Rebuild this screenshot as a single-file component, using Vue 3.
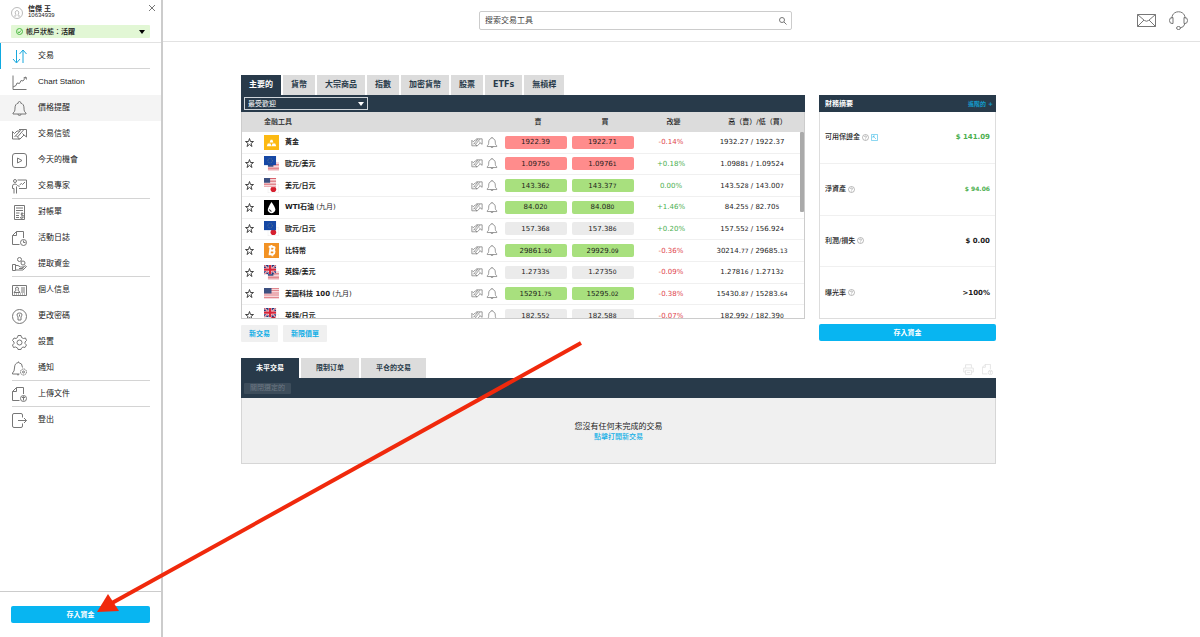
<script setup>
import { ref } from 'vue'

const search = ref('')
const list = ref('popular')

const menu = [
  { icon: 'trade', label: '交易', active: true, line: true },
  { icon: 'chart', label: 'Chart Station' },
  { icon: 'bell', label: '價格提醒', hover: true },
  { icon: 'signal', label: '交易信號' },
  { icon: 'play', label: '今天的機會' },
  { icon: 'expert', label: '交易專家', line: true },
  { icon: 'statement', label: '對帳單' },
  { icon: 'log', label: '活動日誌' },
  { icon: 'withdraw', label: '提取資金', line: true },
  { icon: 'card', label: '個人信息' },
  { icon: 'lock', label: '更改密碼' },
  { icon: 'gear', label: '設置' },
  { icon: 'notify', label: '通知', line: true },
  { icon: 'upload', label: '上傳文件', line: true },
  { icon: 'logout', label: '登出' },
]

const tabs = ['主要的', '貨幣', '大宗商品', '指數', '加密貨幣', '股票', 'ETFs', '無槓桿']
const lowerTabs = ['未平交易', '限制订单', '平仓的交易']

const rows = [
  { flag: 'gold', name: '黃金', tone: 'red', sell: ['1922.39', ''], buy: ['1922.71', ''], change: '-0.14%', high: ['1932.27', ''], low: ['1922.37', ''] },
  { flag: 'eu-us', name: '歐元/美元', tone: 'red', sell: ['1.0975', '0'], buy: ['1.0976', '1'], change: '+0.18%', high: ['1.0988', '1'], low: ['1.0952', '4'] },
  { flag: 'us-jp', name: '美元/日元', tone: 'green', sell: ['143.36', '2'], buy: ['143.37', '7'], change: '0.00%', high: ['143.52', '8'], low: ['143.00', '7'] },
  { flag: 'oil', name: 'WTI石油', note: '(九月)', tone: 'green', sell: ['84.02', '0'], buy: ['84.08', '0'], change: '+1.46%', high: ['84.25', '5'], low: ['82.70', '5'] },
  { flag: 'eu-jp', name: '歐元/日元', tone: 'plain', sell: ['157.36', '8'], buy: ['157.38', '6'], change: '+0.20%', high: ['157.55', '2'], low: ['156.92', '4'] },
  { flag: 'btc', name: '比特幣', tone: 'green', sell: ['29861.', '50'], buy: ['29929.', '09'], change: '-0.36%', high: ['30214.', '77'], low: ['29685.', '13'] },
  { flag: 'gb-us', name: '英鎊/美元', tone: 'plain', sell: ['1.2733', '5'], buy: ['1.2735', '0'], change: '-0.09%', high: ['1.2781', '6'], low: ['1.2713', '2'] },
  { flag: 'us', name: '美國科技 100', note: '(九月)', tone: 'green', sell: ['15291.', '75'], buy: ['15295.', '02'], change: '-0.38%', high: ['15430.', '87'], low: ['15283.', '64'] },
  { flag: 'gb-jp', name: '英鎊/日元', tone: 'plain', sell: ['182.55', '2'], buy: ['182.58', '8'], change: '-0.07%', high: ['182.99', '2'], low: ['182.39', '0'] },
]

const summary = [
  { label: '可用保證金', value: '$ 141.09', up: true, extra: true },
  { label: '淨資產', value: '$ 94.06', up: true, narrow: true },
  { label: '利潤/損失', value: '$ 0.00' },
  { label: '曝光率', value: '>100%' },
]
</script>

<template>
  <div class="app">
    <svg class="defs" aria-hidden="true">
      <defs>
        <symbol id="i-trade" viewBox="0 0 30 30"><path d="M9 2v25M2 20l7 8 7-8M22 28V3M15 10l7-8 7 8" /></symbol>
        <symbol id="i-chart" viewBox="0 0 30 30"><path d="M2 1v28h27M2 24l6-3 2-5 5 1 3-6 4 1 6-8M23 6l5-2 1 5" /></symbol>
        <symbol id="i-bell" viewBox="0 0 30 30"><path d="M15 1a2 2 0 0 1 2 3c5 1 7 5 7 10 0 6 1 8 4 10v2H2v-2c3-2 4-4 4-10 0-5 2-9 7-10a2 2 0 0 1 2-3zM12 26a3 3 0 0 0 6 0" /></symbol>
        <symbol id="i-signal" viewBox="0 0 30 30"><path d="M1 9v15h14l-4-4L23 6M5 20L17 7l-3-2h15v15l-5-4-8 8h-3M1 9l4 4 5-5h5M24 16l-3-3M8 17l3 3" /></symbol>
        <symbol id="i-play" viewBox="0 0 30 30"><rect x="1" y="1" width="28" height="28" rx="5" /><path d="M11 10v10l9-5z" /></symbol>
        <symbol id="i-expert" viewBox="0 0 30 30"><circle cx="6" cy="4" r="3" /><path d="M11 2h18v17H14M1 19v-5q0-4 5-4 3 0 5 3l4 2M4 29V19H1M9 29V15M15 12l4-3 2 2 5-5" /></symbol>
        <symbol id="i-statement" viewBox="0 0 30 30"><path d="M5 1h20v28H5zM8 6h14M8 11h14M8 16h7M8 21h6M8 25h6M23 17q-5-2-5 1t5 3-1 4-5-1M20 15v12" /></symbol>
        <symbol id="i-log" viewBox="0 0 30 30"><path d="M23 14V1H9L1 9v18h14M9 1v8H1" /><circle cx="23" cy="23" r="6" /><path d="M23 19v4h4" /></symbol>
        <symbol id="i-withdraw" viewBox="0 0 30 30"><circle cx="15" cy="5" r="4" /><circle cx="22" cy="12" r="4" /><path d="M1 15h6v12H1zM7 17h5l5 3h5q2 3-2 3h-6M7 26h15l7-7q-2-3-5 0l-3 2" /></symbol>
        <symbol id="i-card" viewBox="0 0 30 30"><path d="M1 5h28v20H1zM4 19q1-3 4-4-3-7 2-7t2 7q3 1 4 4zM18 10h8M18 14h8M18 18h8M4 22h2M8 22h2M12 22h2M16 22h2M20 22h2M24 22h2" /></symbol>
        <symbol id="i-lock" viewBox="0 0 30 30"><circle cx="15" cy="15" r="14" /><path d="M12 16q-5-8 3-8t3 8v6h-6zM15 11v4" /></symbol>
        <symbol id="i-gear" viewBox="0 0 30 30"><path d="M12 1h6l1 4 4 2 4-1 2 5-3 3v3l3 3-3 5-4-1-3 2-1 3h-6l-1-3-4-2-4 1-2-5 3-3v-3l-3-3 3-5 4 1 3-2z" /><circle cx="15" cy="15" r="5" /></symbol>
        <symbol id="i-notify" viewBox="0 0 30 30"><path d="M13 1v2q8 1 8 10M13 3q-8 1-8 11 0 7-4 10v2h14M10 27q2 2 4 0" /><circle cx="23" cy="22" r="6" stroke-dasharray="3 1" /><circle cx="23" cy="22" r="2" /></symbol>
        <symbol id="i-upload" viewBox="0 0 30 30"><path d="M23 14V1H9L1 9v18h14M9 1v8H1" /><circle cx="23" cy="23" r="6" /><path d="M23 27v-7M20 22l3-3 3 3" /></symbol>
        <symbol id="i-logout" viewBox="0 0 30 30"><path d="M21 9V4q0-3-3-3H4Q1 1 1 4v22q0 3 3 3h14q3 0 3-3v-5M12 15h17M24 10l5 5-5 5" /></symbol>
        <symbol id="i-print" viewBox="0 0 30 30"><path d="M7 10V2h16v8M7 22H2V11h26v11h-5M7 17h16v12H7zM11 23h8" /></symbol>
        <symbol id="f-us" viewBox="0 0 16 12">
          <path fill="#fff" d="M0 0h16v12H0z" />
          <path fill="#d9616b" d="M0 0h16v1H0zM0 2h16v1H0zM0 4h16v1H0zM0 6h16v1H0zM0 8h16v1H0zM0 10h16v1H0z" />
          <path fill="#3d5080" d="M0 0h8v6H0z" />
        </symbol>
        <symbol id="f-eu" viewBox="0 0 16 12"><path fill="#1648a5" d="M0 0h16v12H0z" /><circle cx="8" cy="6" r="3" fill="none" stroke="#6f8387" stroke-dasharray="1 1" /></symbol>
        <symbol id="f-gb" viewBox="0 0 16 12">
          <path fill="#26397c" d="M0 0h16v12H0z" />
          <path stroke="#fff" stroke-width="2" d="M0 0l16 12M16 0L0 12" /><path stroke="#d8263a" d="M0 0l16 12M16 0L0 12" />
          <path stroke="#fff" stroke-width="4" d="M8 0v12M0 6h16" /><path stroke="#d8263a" stroke-width="3" d="M8 0v12M0 6h16" />
        </symbol>
        <symbol id="f-jp" viewBox="0 0 16 12"><path fill="#fff" stroke="#e4e4e4" d="M0 0h16v12H0z" /></symbol>
      </defs>
    </svg>

    <aside class="side">
      <header class="user">
        <svg class="avatar" viewBox="0 0 24 24"><circle cx="12" cy="12" r="11" /><path d="M6 18h3c2-1 1-2 0-4-3-9 9-9 6 0-1 2-2 3 0 4h3" /></svg>
        <div class="who"><strong>信傑 王</strong><span>10634939</span></div>
        <button class="close" aria-label="關閉"><svg viewBox="0 0 8 8"><path d="M1 1l6 6M7 1L1 7" /></svg></button>
      </header>
      <button class="status">
        <svg class="ok" viewBox="0 0 14 14"><circle cx="7" cy="7" r="6" /><path d="M4 7l2 3 4-5" /></svg>
        <span>帳戶狀態：<b>活躍</b></span>
        <i class="caret dark"></i>
      </button>
      <nav class="menu">
        <a v-for="m in menu" :key="m.label" href="#" :class="{ active: m.active, hover: m.hover, line: m.line }">
          <svg class="icon"><use :href="'#i-' + m.icon" /></svg>
          <span>{{ m.label }}</span>
        </a>
      </nav>
      <footer><button class="deposit">存入資金</button></footer>
    </aside>

    <div class="page">
      <header class="top">
        <label class="search">
          <input v-model="search" type="text" placeholder="搜索交易工具" aria-label="搜索交易工具" />
          <svg viewBox="0 0 16 16"><circle cx="6" cy="6" r="5" /><path d="M10 10l5 5" /></svg>
        </label>
        <div class="actions">
          <button aria-label="郵件"><svg class="mail" viewBox="0 0 38 26"><path d="M1 1h36v24H1zM1 1l14 12q4 3 8 0L37 1M1 25l13-13M37 25L24 12" /></svg></button>
          <button aria-label="客服"><svg class="headset" viewBox="0 0 38 38"><path d="M6 15C5-3 33-3 32 15M6 13q-5 0-5 6t5 6h2V13zM32 13q5 0 5 6t-5 6h-2V13zM32 25q-2 8-10 9" /><ellipse cx="19" cy="34" rx="4" ry="3" /></svg></button>
        </div>
      </header>

      <main>
        <div class="upper">
          <section class="market">
            <div class="tabs">
              <button v-for="(t, i) in tabs" :key="t" :class="{ on: i === 0 }">{{ t }}</button>
            </div>
            <div class="bar">
              <div class="pick">
                <select v-model="list" aria-label="清單"><option value="popular">最受歡迎</option></select>
                <i class="caret"></i>
              </div>
            </div>
            <div class="frame">
              <table>
                <colgroup><col class="c-star" /><col /><col class="c-tools" /><col class="c-price" /><col class="c-price" /><col class="c-change" /><col class="c-range" /></colgroup>
                <thead>
                  <tr><th></th><th class="first">金融工具</th><th></th><th>賣</th><th>買</th><th>改變</th><th>高（賣）/低（買）</th></tr>
                </thead>
                <tbody>
                  <tr v-for="r in rows" :key="r.name">
                    <td>
                      <button class="star" aria-label="收藏"><svg viewBox="0 0 18 18"><path d="M9 1l2 6h6l-5 4 2 6-5-4-5 4 2-6-5-4h6z" /></svg></button>
                    </td>
                    <td>
                      <div class="asset">
                        <svg class="flag" viewBox="0 0 16 16">
                          <template v-if="r.flag === 'gold'"><path fill="#fcb912" d="M0 0h16v16H0z" /><path fill="#fff" d="M7 5h2l1 3H6zM4 9h3l1 3H3zM9 9h3l1 3H8z" /></template>
                          <template v-else-if="r.flag === 'oil'"><path fill="#000" d="M0 0h16v16H0z" /><path fill="#fff" d="M8 2q5 7 4 9-1 3-4 3t-4-3q0-3 4-9z" /><path stroke="#000" fill="none" d="M6 10q0 2 2 2" /></template>
                          <template v-else-if="r.flag === 'btc'"><path fill="#f29224" d="M0 0h16v16H0z" /><path fill="none" stroke="#fff" stroke-width="2" d="M5 4h4q3 0 2 2 0 2-3 2H6h3q3 0 2 2 0 2-3 2H5M7 4L6 12M8 2v2M9 12v2" /></template>
                          <use v-else-if="r.flag === 'us'" href="#f-us" y="2" width="16" height="12" />
                          <template v-else>
                            <use :href="'#f-' + r.flag.slice(3)" x="4" y="7" width="12" height="9" />
                            <circle v-if="r.flag.endsWith('jp')" cx="10" cy="12" r="3" fill="#d6202f" />
                            <use :href="'#f-' + r.flag.slice(0, 2)" width="13" height="10" />
                          </template>
                        </svg>
                        <span><b>{{ r.name }}</b> {{ r.note }}</span>
                      </div>
                    </td>
                    <td>
                      <div class="tools">
                        <button aria-label="信號"><svg><use href="#i-signal" /></svg></button>
                        <button aria-label="提醒"><svg><use href="#i-bell" /></svg></button>
                      </div>
                    </td>
                    <td><button class="price" :class="r.tone">{{ r.sell[0] }}<small>{{ r.sell[1] }}</small></button></td>
                    <td><button class="price" :class="r.tone">{{ r.buy[0] }}<small>{{ r.buy[1] }}</small></button></td>
                    <td class="change" :class="r.change[0] === '-' ? 'down' : 'up'">{{ r.change }}</td>
                    <td class="range">{{ r.high[0] }}<small>{{ r.high[1] }}</small> / {{ r.low[0] }}<small>{{ r.low[1] }}</small></td>
                  </tr>
                </tbody>
              </table>
              <div class="thumb"></div>
            </div>
            <div class="under">
              <button>新交易</button>
              <button>新限價單</button>
            </div>
          </section>

          <section class="finance">
            <header><h2>財務摘要</h2><a href="#">進階的 +</a></header>
            <dl>
              <div v-for="s in summary" :key="s.label">
                <dt>
                  {{ s.label }}
                  <svg class="q" viewBox="0 0 14 14"><circle cx="7" cy="7" r="6" /><path d="M5 6q0-2 2-2t2 2l-2 2v1M7 10v1" /></svg>
                  <svg v-if="s.extra" class="q ext" viewBox="0 0 14 14"><path d="M1 1h12v12H1zM4 8V4h4M4 4l6 6" /></svg>
                </dt>
                <dd :class="{ up: s.up, narrow: s.narrow }">{{ s.value }}</dd>
              </div>
            </dl>
            <button class="deposit">存入資金</button>
          </section>
        </div>

        <section class="trades">
          <div class="head">
            <div class="tabs">
              <button v-for="(t, i) in lowerTabs" :key="t" :class="{ on: i === 0 }">{{ t }}</button>
            </div>
            <div class="export">
              <button aria-label="列印"><svg><use href="#i-print" /></svg></button>
              <button aria-label="匯出"><svg><use href="#i-upload" /></svg></button>
            </div>
          </div>
          <div class="bar"><button class="closeall" disabled>關閉選定的</button></div>
          <div class="empty">
            <p>您沒有任何未完成的交易</p>
            <a href="#">點擊打開新交易</a>
          </div>
        </section>
      </main>
    </div>

    <svg class="arrow" width="600" height="637" viewBox="0 0 600 637" aria-hidden="true">
      <path d="M581 343L112 603" stroke="#f0290c" stroke-width="4" />
      <path d="M97 612l11-18 11 17z" fill="#f0290c" />
    </svg>
  </div>
</template>

<style>
body { margin: 0; background: #fff; }
</style>

<style scoped>
.app {
  position: relative;
  display: flex;
  min-height: 100vh;
  color: #1c1c1c;
  font: 7px/10px "DejaVu Sans", "Noto Sans CJK TC", sans-serif;
}
.app * { box-sizing: border-box; }
button, input, select { margin: 0; padding: 0; border: 0; background: none; color: inherit; font: inherit; }
button { cursor: pointer; }
a { text-decoration: none; }
svg { display: block; fill: none; stroke: #777; }
.flag { stroke: none; }
.defs { position: absolute; width: 0; height: 0; }
.arrow { position: absolute; left: 0; top: 0; stroke: none; pointer-events: none; }

.side {
  flex: 0 0 163px;
  display: flex;
  flex-direction: column;
  border-right: 2px solid #ccc;
  font-family: "Liberation Sans", "Noto Sans CJK TC", sans-serif;
}
.user { display: flex; align-items: flex-start; height: 25px; padding: 4px 5px 0 11px; }
.avatar { width: 12px; height: 12px; margin-top: 3px; }
.who { flex: 1; display: flex; flex-direction: column; margin-left: 5px; padding-top: 1px; font-size: 6px; line-height: 7px; }
.who strong { font-size: 7px; }
.close svg { width: 8px; height: 8px; }
.status {
  display: flex;
  align-items: center;
  gap: 3px;
  height: 13px;
  margin: 0 11px;
  padding: 0 5px;
  background: #e2f7d5;
  border-radius: 1px;
  font-weight: 500;
}
.status .caret { margin-left: auto; }
.ok { width: 7px; height: 7px; stroke: #4cb944; stroke-width: 2; }
.caret { border: 3px solid transparent; border-top: 4px solid #fff; border-bottom: 0; }
.caret.dark { border-top-color: #000; }
.menu { margin-top: 4px; border-top: 1px solid #e2e2e2; font-size: 8px; }
.menu a {
  position: relative;
  display: flex;
  align-items: center;
  gap: 11px;
  height: 26px;
  padding-left: 12px;
  color: #222;
}
.menu a.hover { background: #f4f4f4; }
.menu a.active::before { content: ""; position: absolute; left: 0; top: 0; bottom: 0; width: 1px; background: #0fa9e0; }
.menu a.line::after { content: ""; position: absolute; left: 12px; right: 11px; bottom: 0; height: 1px; background: #d4d4d4; }
.icon { width: 15px; height: 15px; stroke-width: 2; }
.menu a.active .icon { stroke: #18a8dd; }
.side footer { margin-top: auto; padding: 14px 11px; border-top: 1px solid #ccc; }
.deposit { width: 100%; height: 17px; background: #08b5f1; border-radius: 2px; color: #fff; font-weight: bold; }

.page { flex: 1; min-width: 0; }
.top {
  display: flex;
  align-items: center;
  justify-content: space-between;
  height: 42px;
  padding: 0 12px 0 316px;
  border-bottom: 1px solid #e2e2e2;
}
.search {
  display: flex;
  align-items: center;
  flex: 0 1 313px;
  height: 19px;
  padding: 0 4px 0 5px;
  border: 1px solid #ccc;
  border-radius: 2px;
}
.search input { flex: 1; min-width: 0; outline: 0; font-size: 8px; }
.search input::placeholder { color: #444; opacity: 1; }
.search svg { width: 8px; height: 8px; stroke-width: 2; }
.actions { display: flex; align-items: center; gap: 13px; }
.mail { width: 19px; height: 13px; stroke-width: 2; }
.headset { width: 19px; height: 19px; stroke-width: 2; }

main { padding: 33px 204px 20px 78px; }
.upper { display: grid; grid-template-columns: minmax(0, 1fr) 177px; gap: 14px; }
.tabs { display: flex; gap: 2px; height: 20px; }
.tabs button { padding: 0 8px; background: #dcdcdc; color: #283a4a; font-size: 8px; font-weight: bold; white-space: nowrap; }
.tabs button.on { background: #283a4a; color: #fff; }
.bar { display: flex; align-items: center; height: 17px; padding: 0 3px; background: #283a4a; }
.pick { display: flex; align-items: center; width: 124px; height: 13px; padding: 0 3px; border: 1px solid #cfd5da; color: #fff; }
.pick select { flex: 1; appearance: none; outline: 0; }
.pick option { color: #222; }
.frame { position: relative; height: 207px; overflow: hidden; border: 1px solid #ccc; border-top: 0; }
table { width: 100%; height: 215px; table-layout: fixed; border-collapse: collapse; }
.c-star { width: 22px; }
.c-tools { width: 32px; }
.c-price { width: 67px; }
.c-change { width: 70px; }
.c-range { width: 98px; }
th { height: 20px; padding: 0 0 0 5px; background: #dcdcdc; font-weight: 500; }
th.first { padding: 0; text-align: left; }
td { padding: 0; border-bottom: 1px solid #f0f0f0; text-align: center; white-space: nowrap; }
td:last-child { padding-right: 6px; }
.star { display: block; margin-left: 3px; }
.star svg { width: 9px; height: 9px; stroke: #444; stroke-width: 2; }
.asset { display: flex; align-items: center; gap: 6px; text-align: left; }
.flag { width: 15px; height: 15px; }
.tools { display: flex; gap: 3px; padding-left: 1px; }
.tools svg { width: 12px; height: 11px; stroke-width: 2; }
.price { width: 62px; height: 13px; border-radius: 2px; background: #ebebeb; display: block; margin: 0 auto; }
.price.red { background: #ff8c8c; }
.price.green { background: #a8e07e; }
small { font-size: 6px; }
.up { color: #4caf50; }
.down { color: #e0454c; }
.thumb { position: absolute; top: 20px; right: 0; width: 4px; height: 80px; background: #aaa; border-radius: 1px; }
.under { display: flex; gap: 5px; margin-top: 6px; }
.under button { height: 17px; padding: 0 8px; background: #f0f0f0; color: #12aee6; font-weight: bold; border-radius: 1px; }

.finance { display: flex; flex-direction: column; padding: 20px 0 1px; }
.finance header { display: flex; align-items: center; justify-content: space-between; height: 17px; padding: 0 3px 0 6px; background: #283a4a; }
h2 { margin: 0; color: #fff; font-size: 7px; }
.finance header a { color: #139ccc; font-size: 6px; font-weight: bold; }
dl { flex: 1; display: flex; flex-direction: column; margin: 0 0 5px; border: 1px solid #ddd; border-top: 0; }
dl div { flex: 1; display: flex; align-items: center; justify-content: space-between; padding: 0 5px; }
dl div + div { border-top: 1px solid #f0f0f0; }
dt { display: flex; align-items: center; gap: 2px; font-weight: 500; }
dd { margin: 0; font-weight: bold; }
dd.narrow { font-size: 6px; }
.q { width: 7px; height: 7px; }
.ext { stroke: #19aee3; }

.trades { margin-top: 16px; }
.trades .head { display: flex; justify-content: space-between; align-items: flex-end; }
.trades .tabs button { padding: 0 15px; font-size: 7px; }
.export { display: flex; gap: 8px; padding: 0 3px 3px 0; }
.export svg { width: 11px; height: 11px; stroke: #ddd; stroke-width: 2; }
.trades .bar { height: 20px; }
.closeall { height: 11px; padding: 0 6px; background: #3d4d5b; color: #6d7984; border-radius: 1px; }
.empty { display: flex; flex-direction: column; align-items: center; height: 66px; padding-top: 23px; background: #f0f0f0; border: 1px solid #d6d6d6; border-top: 0; }
.empty p { margin: 0; font-size: 8px; line-height: 11px; }
.empty a { color: #12aee6; font-weight: 500; }
</style>
